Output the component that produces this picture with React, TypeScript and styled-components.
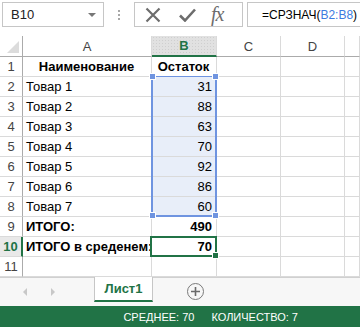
import React, { JSX } from 'react';
import styled, { createGlobalStyle, css } from 'styled-components';

const GREEN = '#217346';
const GRID = '#dadada';
const HEAD_LINE = '#ababab';
const SEL = '#6f94e0';

const GlobalStyle = createGlobalStyle`
  html, body {
    margin: 0;
    padding: 0;
    background: #fff;
    overflow: hidden;
  }
  body {
    font-family: "Liberation Sans", Arial, sans-serif;
    color: #000;
  }
`;

const Window = styled.div`
  width: 360px;
  height: 327px;
  display: flex;
  flex-direction: column;
  overflow: hidden;
`;

const Toolbar = styled.div`
  height: 36px;
  display: flex;
  align-items: flex-start;
  padding: 2px 0 0 2px;
  box-sizing: border-box;
`;

const NameBox = styled.div`
  width: 102px;
  height: 25px;
  box-sizing: border-box;
  border: 1px solid #c6c6c6;
  display: flex;
  align-items: center;
  justify-content: space-between;
  padding: 0 7px 0 8px;
  font-size: 13px;
  color: #222;
`;

const DropArrow = styled.span`
  width: 0;
  height: 0;
  border-left: 4px solid transparent;
  border-right: 4px solid transparent;
  border-top: 4px solid #777;
`;

const Grip = styled.div`
  width: 30px;
  height: 25px;
  display: flex;
  flex-direction: column;
  align-items: center;
  justify-content: center;
  gap: 2px;

  span {
    width: 2px;
    height: 2px;
    background: #a8a8a8;
  }
`;

const FormulaButtons = styled.div`
  width: 109px;
  height: 25px;
  box-sizing: border-box;
  border: 1px solid #c6c6c6;
  display: flex;
  align-items: center;
  padding-left: 10px;
  gap: 18px;
`;

const FxLabel = styled.span`
  font-family: "Liberation Serif", "Times New Roman", serif;
  font-style: italic;
  font-size: 20px;
  color: #6d6d6d;
  letter-spacing: -1px;
  margin-left: -3px;
`;

const FormulaInput = styled.div`
  flex: 1;
  height: 25px;
  box-sizing: border-box;
  border: 1px solid #c6c6c6;
  border-right: none;
  margin-left: 4px;
  display: flex;
  align-items: center;
  padding-left: 14px;
  font-size: 12px;
  white-space: nowrap;
`;

const Ref = styled.span`
  color: #3b7be0;
`;

const SheetArea = styled.div`
  display: grid;
  font-size: 13px;

  & > * {
    grid-area: 1 / 1;
  }
`;

const sheetTemplate = css`
  display: grid;
  grid-template-columns: 23px 129px 65px 64px 64px 1fr;
  grid-template-rows: 21px repeat(11, 20px);
`;

const Sheet = styled.div`
  ${sheetTemplate}
`;

const OverlayLayer = styled.div`
  ${sheetTemplate}
  pointer-events: none;
  z-index: 1;
`;

const Corner = styled.div`
  box-sizing: border-box;
  border-right: 1px solid ${HEAD_LINE};
  border-bottom: 1px solid ${HEAD_LINE};
  position: relative;

  &::after {
    content: '';
    position: absolute;
    right: 3px;
    bottom: 3px;
    width: 12px;
    height: 12px;
    background: #dcdcdc;
    clip-path: polygon(100% 0, 100% 100%, 0 100%);
  }
`;

const ColHeader = styled.div<{ $active?: boolean }>`
  box-sizing: border-box;
  border-right: 1px solid ${GRID};
  border-bottom: 1px solid ${HEAD_LINE};
  display: flex;
  align-items: center;
  justify-content: center;
  color: #444;
  ${(p) =>
    p.$active &&
    css`
      background-color: #e1e1e1;
      background-image: radial-gradient(#cfcfcf 0.6px, transparent 0.7px);
      background-size: 3px 3px;
      color: ${GREEN};
      font-weight: bold;
      border-bottom: 2px solid ${GREEN};
    `}
`;

const RowHeader = styled.div<{ $active?: boolean }>`
  box-sizing: border-box;
  border-right: 1px solid ${HEAD_LINE};
  border-bottom: 1px solid ${GRID};
  display: flex;
  align-items: center;
  justify-content: center;
  color: #444;
  ${(p) =>
    p.$active &&
    css`
      background: #e9e9e9;
      color: ${GREEN};
      font-weight: bold;
      border-right: 2px solid ${GREEN};
    `}
`;

const Cell = styled.div<{ $align?: 'left' | 'center' | 'right'; $bold?: boolean; $selected?: boolean }>`
  box-sizing: border-box;
  border-right: 1px solid ${GRID};
  border-bottom: 1px solid ${GRID};
  padding: 0 4px 0 3px;
  line-height: 19px;
  white-space: nowrap;
  overflow: visible;
  text-align: ${(p) => p.$align || 'left'};
  font-weight: ${(p) => (p.$bold ? 'bold' : 'normal')};
  background: ${(p) => (p.$selected ? '#e8eef9' : 'transparent')};
`;

const Handle = styled.span<{ $color: string; $pos: 'tl' | 'tr' | 'bl' | 'br' }>`
  position: absolute;
  width: 5px;
  height: 5px;
  background: ${(p) => p.$color};
  border: 1px solid #fff;
  ${(p) => (p.$pos[0] === 't' ? 'top: -4px;' : 'bottom: -4px;')}
  ${(p) => (p.$pos[1] === 'l' ? 'left: -4px;' : 'right: -4px;')}
`;

const Selection = styled.div`
  grid-column: 3 / 4;
  grid-row: 3 / 10;
  position: relative;
  margin: -1px 0 0 -1px;
  border: 2px solid ${SEL};
  border-top-width: 1px;
`;

const ActiveCell = styled.div`
  grid-column: 3 / 4;
  grid-row: 11 / 12;
  position: relative;
  margin: -1px 0 0 -2px;
  border: 2px solid ${GREEN};
`;

const TabBar = styled.div`
  height: 29px;
  box-sizing: border-box;
  border-top: 1px solid #d0d0d0;
  background: #f7f7f7;
  display: flex;
  align-items: flex-start;
  padding-left: 23px;
`;

const NavArrow = styled.span<{ $dir: 'left' | 'right' }>`
  width: 0;
  height: 0;
  margin-top: 10px;
  border-top: 4px solid transparent;
  border-bottom: 4px solid transparent;
  ${(p) =>
    p.$dir === 'left'
      ? css`
          border-right: 4px solid #c8c8c8;
          margin-right: 24px;
        `
      : css`
          border-left: 4px solid #c8c8c8;
          margin-right: 39px;
        `}
`;

const Tab = styled.div`
  width: 59px;
  height: 25px;
  margin-top: -1px;
  box-sizing: border-box;
  background: #fff;
  border-left: 1px solid #c6c6c6;
  border-right: 1px solid #c6c6c6;
  border-bottom: 2px solid ${GREEN};
  display: flex;
  align-items: center;
  justify-content: center;
  color: ${GREEN};
  font-weight: bold;
  font-size: 13px;
`;

const AddSheet = styled.div`
  width: 15px;
  height: 15px;
  margin: 5px 0 0 34px;
  border: 1.5px solid #7a7a7a;
  border-radius: 50%;
  display: flex;
  align-items: center;
  justify-content: center;
`;

const StatusBar = styled.div`
  height: 21px;
  background: ${GREEN};
  color: #fff;
  display: flex;
  align-items: center;
  justify-content: flex-end;
  gap: 17px;
  padding-right: 62px;
  font-size: 11px;
`;

const items = [
  { name: 'Товар 1', qty: 31 },
  { name: 'Товар 2', qty: 88 },
  { name: 'Товар 3', qty: 63 },
  { name: 'Товар 4', qty: 70 },
  { name: 'Товар 5', qty: 92 },
  { name: 'Товар 6', qty: 86 },
  { name: 'Товар 7', qty: 60 },
];

type Row = { a?: string; b?: string; bold?: boolean; aAlign?: 'left' | 'center'; bAlign?: 'center' | 'right'; sel?: boolean };

const rows: Row[] = [
  { a: 'Наименование', b: 'Остаток', bold: true, aAlign: 'center', bAlign: 'center' },
  ...items.map((it) => ({ a: it.name, b: String(it.qty), sel: true })),
  { a: 'ИТОГО:', b: '490', bold: true },
  { a: 'ИТОГО в среденем:', b: '70', bold: true },
  {},
];

const App = (): JSX.Element => (
  <Window>
    <GlobalStyle />
    <Toolbar>
      <NameBox>
        B10
        <DropArrow />
      </NameBox>
      <Grip>
        <span />
        <span />
        <span />
      </Grip>
      <FormulaButtons>
        <svg width='16' height='16' viewBox='0 0 16 16'>
          <path d='M1.5 1.5 L14.5 14.5 M14.5 1.5 L1.5 14.5' stroke='#6d6d6d' strokeWidth='2.2' fill='none' />
        </svg>
        <svg width='17' height='14' viewBox='0 0 17 14'>
          <path d='M1 7.5 L6 12.5 L16 1.5' stroke='#6d6d6d' strokeWidth='2.6' fill='none' strokeLinejoin='miter' />
        </svg>
        <FxLabel>fx</FxLabel>
      </FormulaButtons>
      <FormulaInput>
        =СРЗНАЧ(<Ref>B2:B8</Ref>)
      </FormulaInput>
    </Toolbar>

    <SheetArea>
      <Sheet>
        <Corner />
        <ColHeader>A</ColHeader>
        <ColHeader $active>B</ColHeader>
        <ColHeader>C</ColHeader>
        <ColHeader>D</ColHeader>
        <ColHeader />
        {rows.map((r, i) => (
          <React.Fragment key={i}>
            <RowHeader $active={i === 9}>{i + 1}</RowHeader>
            <Cell $bold={r.bold} $align={r.aAlign}>
              {r.a}
            </Cell>
            <Cell $bold={r.bold} $align={r.bAlign || 'right'} $selected={r.sel}>
              {r.b}
            </Cell>
            <Cell />
            <Cell />
            <Cell />
          </React.Fragment>
        ))}
      </Sheet>
      <OverlayLayer>
        <Selection>
          <Handle $color={SEL} $pos='tl' />
          <Handle $color={SEL} $pos='tr' />
          <Handle $color={SEL} $pos='bl' />
          <Handle $color={SEL} $pos='br' />
        </Selection>
        <ActiveCell>
          <Handle $color={GREEN} $pos='br' />
        </ActiveCell>
      </OverlayLayer>
    </SheetArea>

    <TabBar>
      <NavArrow $dir='left' />
      <NavArrow $dir='right' />
      <Tab>Лист1</Tab>
      <AddSheet>
        <svg width='9' height='9' viewBox='0 0 9 9'>
          <path d='M4.5 0 V9 M0 4.5 H9' stroke='#6a6a6a' strokeWidth='1.6' />
        </svg>
      </AddSheet>
    </TabBar>

    <StatusBar>
      <span>СРЕДНЕЕ: 70</span>
      <span>КОЛИЧЕСТВО: 7</span>
    </StatusBar>
  </Window>
);

export default App;
